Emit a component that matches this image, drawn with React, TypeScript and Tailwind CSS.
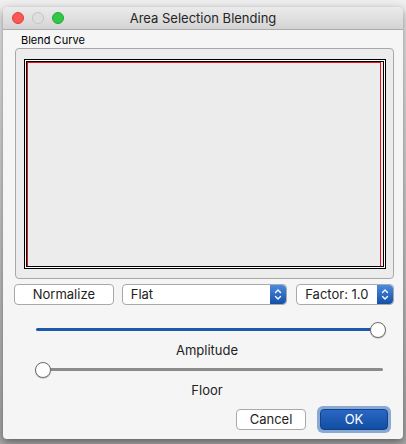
import React from 'react';

const font = { fontFamily: 'Inter, "Liberation Sans", sans-serif' };

const Stepper = () => (
    <div className="w-[16px] h-full rounded-r-[4px] bg-gradient-to-b from-[#4a8ae0] to-[#1450a6] flex items-center justify-center">
        <svg width="8" height="13" viewBox="0 0 8 13" fill="none" stroke="white" strokeWidth="1.4" strokeLinecap="round" strokeLinejoin="round">
            <path d="M1.5 4.5 4 2l2.5 2.5" />
            <path d="M1.5 8.5 4 11l2.5-2.5" />
        </svg>
    </div>
);

const Select = ({ label, className }: { label: string; className: string }) => (
    <div className={`h-[21px] flex items-stretch bg-white border border-[#a9a9a9] rounded-[4px] ${className}`}>
        <span className="flex-1 pl-[8px] text-[13px] leading-[19px] text-[#222]">{label}</span>
        <Stepper />
    </div>
);

const Slider = ({ value, active }: { value: number; active: boolean }) => (
    <div className="relative h-[16px] w-[351px] ml-[21px]">
        <div className={`absolute left-[1px] right-[3px] top-[6px] h-[3px] rounded-full ${active ? 'bg-[#1d58ad]' : 'bg-[#8b8b8b]'}`} />
        <div
            className="absolute top-0 w-[16px] h-[16px] rounded-full bg-white border border-[#6f6f6f] shadow-[0_0.5px_1px_rgba(0,0,0,0.3)]"
            style={{ left: value === 0 ? 0 : 335 }}
        />
    </div>
);

export default function App() {
    return (
        <div className="w-[406px] h-[444px] bg-gradient-to-b from-[#efefef] to-[#a8a8a8] pt-[7px] pl-[3px] overflow-hidden" style={font}>
            <div className="w-[400px] h-[432px] bg-[#f5f5f5] rounded-t-[5px] rounded-b-[4px] shadow-[0_3px_8px_rgba(0,0,0,0.45)] overflow-hidden">
                {/* title bar */}
                <div className="relative h-[23px] bg-gradient-to-b from-[#ebebeb] to-[#d4d4d4] border-b border-[#ababab] flex items-center justify-center">
                    <div className="absolute left-[9px] top-[5px] flex gap-[8px]">
                        <div className="w-[12px] h-[12px] rounded-full bg-[#fc5753] border border-[#df3d38]" />
                        <div className="w-[12px] h-[12px] rounded-full bg-[#dedede] border border-[#c4c4c4]" />
                        <div className="w-[12px] h-[12px] rounded-full bg-[#33c748] border border-[#1fa830]" />
                    </div>
                    <span className="text-[13px] text-[#262626] leading-none">Area Selection Blending</span>
                </div>

                <div className="pl-[11px] pr-[9px]">
                    <div className="pl-[7px] pt-[4px] h-[18px] text-[11px] leading-[13px] text-black">Blend Curve</div>

                    {/* group box */}
                    <div className="ml-[1px] h-[231px] bg-[#ececec] border border-[#a8a8a8] rounded-[4px] pt-[10px] pl-[8px]">
                        <div className="w-[362px] h-[210px] border border-black p-px bg-white">
                            <div className="h-full border border-black bg-[#ececec]">
                                <div className="h-full mr-[2px] border-l border-t border-r border-[#e4141b]" />
                            </div>
                        </div>
                    </div>

                    {/* controls row */}
                    <div className="flex mt-[5px] gap-[8px]">
                        <div className="w-[100px] h-[21px] bg-white border border-[#a9a9a9] rounded-[4px] text-[13px] leading-[19px] text-center text-[#222]">Normalize</div>
                        <Select label="Flat" className="w-[166px]" />
                        <Select label="Factor: 1.0" className="w-[98px] ml-px" />
                    </div>

                    <div className="mt-[17px]">
                        <Slider value={1} active />
                        <div className="text-center text-[13px] leading-[16px] mt-[4px] pl-[6px] text-[#222]">Amplitude</div>
                    </div>
                    <div className="mt-[4px]">
                        <Slider value={0} active={false} />
                        <div className="text-center text-[13px] leading-[16px] mt-[4px] pl-[6px] text-[#222]">Floor</div>
                    </div>

                    <div className="flex justify-end items-center gap-[11px] mt-[8px] pr-[3px]">
                        <div className="w-[70px] h-[21px] bg-white border border-[#a9a9a9] rounded-[4px] text-[13px] leading-[19px] text-center text-[#222]">Cancel</div>
                        <div className="w-[74px] h-[27px] rounded-[6px] bg-[#8aa9d2] p-[3px]">
                            <div className="h-full rounded-[4px] bg-gradient-to-b from-[#2a67c4] to-[#114ea3] border border-[#0f428b] text-[13px] leading-[19px] text-center text-white">OK</div>
                        </div>
                    </div>
                </div>
            </div>
        </div>
    );
}
